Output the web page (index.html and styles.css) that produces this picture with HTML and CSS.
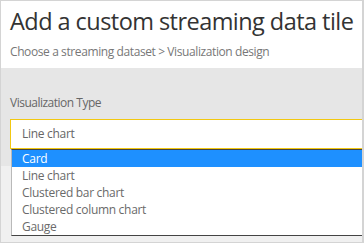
FILE: index.html
```html
<!DOCTYPE html>
<html lang="en">
    <head>
        <meta charset="UTF-8">
        <title>Add a custom streaming data tile</title>
        <link rel="stylesheet" href="styles.css">
    </head>
    <body>
        <div class="dialogo">
            <!-- Cabecera del dialogo -->
            <div class="cabecera">
                <h1>Add a custom streaming data tile</h1>
                <p class="ruta">Choose a streaming dataset &gt; Visualization design</p>
            </div>

            <!-- Panel gris con el selector -->
            <div class="panel">
                <label class="etiqueta">Visualization Type</label>
                <div class="selector">
                    <div class="caja">Line chart</div>
                    <!-- Lista desplegada encima del contenido -->
                    <ul class="opciones">
                        <li class="activa">Card</li>
                        <li>Line chart</li>
                        <li>Clustered bar chart</li>
                        <li>Clustered column chart</li>
                        <li>Gauge</li>
                    </ul>
                </div>
            </div>
            <div class="resto"></div>
        </div>
    </body>
</html>
```

FILE: styles.css
```css
body {
    margin: 0;
    font-family: "Open Sans", Arial, sans-serif;
    background-color: #ffffff;
}
.dialogo {
    width: 364px;
    height: 243px;
    box-sizing: border-box;
    border: 1px solid #d4d4d4;
    border-right-width: 2px;
    display: flex;
    flex-direction: column;
    overflow: hidden;
}
.cabecera {
    background-color: #ffffff;
    height: 67px;
    padding: 0 0 0 9px;
    box-sizing: border-box;
}
h1 {
    margin: 0;
    padding-top: 3px;
    font-size: 23.5px;
    font-weight: 400;
    color: #333333;
    letter-spacing: -0.55px;
    line-height: 34px;
    white-space: nowrap;
}
.ruta {
    margin: 5px 0 0;
    font-size: 12px;
    color: #777777;
    letter-spacing: -0.4px;
}
.panel {
    background-color: #e6e6e6;
    height: 98px;
    padding: 27px 0 0 9px;
    box-sizing: border-box;
}
.etiqueta {
    display: block;
    font-size: 12px;
    color: #666666;
    letter-spacing: -0.5px;
    line-height: 16px;
}
.selector {
    position: relative;
    margin-top: 8px;
}
.caja {
    background-color: #ffffff;
    border: 1px solid #f2c811;
    border-right: none;
    height: 28px;
    line-height: 28px;
    padding-left: 11px;
    font-size: 12px;
    letter-spacing: -0.3px;
    color: #666666;
}
.opciones {
    position: absolute;
    top: 30px;
    left: 1px;
    right: 0;
    margin: 0;
    padding: 0;
    list-style: none;
    background-color: #ffffff;
    border-top: 1px solid #444444;
    border-left: 1px solid #b9b9b9;
    border-bottom: 1px solid #444444;
}
.opciones li {
    height: 17px;
    line-height: 17px;
    padding-left: 10px;
    font-size: 12px;
    letter-spacing: -0.3px;
    color: #6a6a6a;
}
.opciones li.activa {
    background-color: #1e90ff;
    color: #ffffff;
}
.resto {
    flex: 1;
    background-color: #f0f0f0;
}
```
